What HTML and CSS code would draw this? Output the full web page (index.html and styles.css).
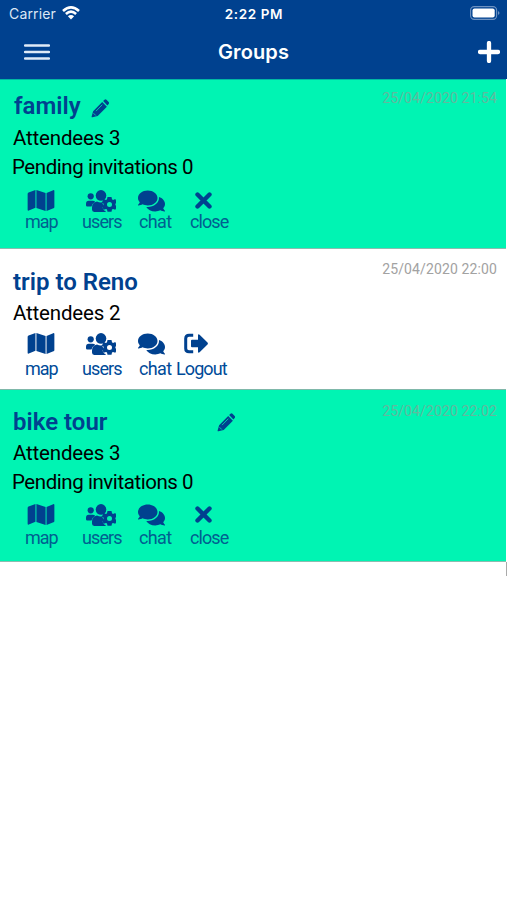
FILE: index.html
```html
<!DOCTYPE html>
<html lang="en">
<head>
<meta charset="utf-8">
<title>Groups</title>
<link rel="stylesheet" href="styles.css">
</head>
<body>
<svg class="defs" aria-hidden="true">
  <symbol id="map" viewBox="0 0 28 22"><path d="M0 4.2Q0 3 1 2.6L8.200 0v18.600L1.200 21.600Q0 22 0 20.800zM9.200 0l9.600 3.100v18.800l-9.600-3.100zM19.800 3.200l7-3Q28-.2 28 1v16.700q0 1.100-1 1.500l-7.200 2.700z"/></symbol>
  <symbol id="users" viewBox="0 0 30 22"><circle cx="4.700" cy="6.300" r="3.100"/><circle cx="15" cy="5.400" r="5.300"/><path d="M2.800 10.800h4q1.400 0 2.400.9-2.900 1.700-3.700 4.800H1.300Q0 16.500 0 15.200v-1.400Q0 10.800 2.800 10.800z"/><path d="M11 11.500q3.600 1.700 6.600.3l-1.200 2 1.500 1.500-1.500 2.300 1.700 3 1.500.4v1H8.200Q6 22 6 19.600v-2q0-5.300 5-6.100z"/><path fill-rule="evenodd" d="M21.500 7h4l.5 2.300 1 .6 2.300-.8 1.700 3.100-1.600 1.500v1.400l1.600 1.500-1.700 3.100-2.300-.8-1 .6-.5 2.300h-4l-.5-2.300-1-.6-2.300.8-1.700-3.100 1.600-1.500v-1.400L16 12.200l1.700-3.100 2.300.8 1-.6zM23.500 11.900a2.500 2.500 0 1 0 0 5a2.500 2.500 0 1 0 0-5z"/></symbol>
  <symbol id="chat" viewBox="0 0 576 512"><path d="M416 192c0-88.400-93.100-160-208-160S0 103.600 0 192c0 34.300 14.100 65.900 38 92-13.400 30.200-35.500 54.200-35.800 54.500-4.500 4.700-3 13.500 5.800 13.500 36.600 0 66.900-12.300 88.700-25 32.200 15.700 70.300 25 111.300 25 114.900 0 208-71.600 208-160z"/><path d="M538 412c23.900-26 38-57.700 38-92 0-66.900-53.500-124.200-129.300-148.100.9 6.600 1.300 13.300 1.300 20.100 0 105.900-107.700 192-240 192-10.800 0-21.300-.8-31.700-1.900C207.800 439.600 281.800 480 368 480c41 0 79.100-9.200 111.300-25 21.800 12.700 52.100 25 88.700 25 8.800 0 10.300-8.800 5.800-13.500-.3-.3-22.400-24.200-35.800-54.500z"/></symbol>
  <symbol id="close" viewBox="0 0 17 17"><path d="M2.500 2.500l12 12M14.500 2.500l-12 12" fill="none" stroke="currentColor" stroke-width="4.400" stroke-linecap="round"/></symbol>
  <symbol id="logout" viewBox="0 0 24 20"><path d="M9.200 1.700H5Q1.700 1.700 1.700 5v10q0 3.300 3.300 3.300h4.200" fill="none" stroke="currentColor" stroke-width="3"/><path d="M8 6.300h6V2q0-2 1.600-.8L23.500 9q.8 1 0 2l-7.900 7.800Q14 20 14 18v-4.300H8q-1 0-1-1V7.300q0-1 1-1z"/></symbol>
  <symbol id="pencil" viewBox="0 0 18 19"><path d="M2.100 12.300L11.200 3l4.700 4.700-9.200 9.300-5.200 1.300q-1 .2-.9-.8zM12.100 2.100l1.400-1.400q1-.9 2 0l2.200 2.200q.8 1 0 2l-1.300 1.700z"/><path class="pencil-line" d="M5 12.100l6.300-6.400M2.500 14.200l2.300 2.300"/></symbol>
</svg>

<header class="header">
  <div class="status">
    <div class="status-left"><span class="carrier">Carrier</span>
      <svg class="wifi" viewBox="0 0 18 14"><path d="M1 5Q9-2.200 17 5M3.900 8Q9 3.400 14.100 8" fill="none" stroke="currentColor" stroke-width="2.600"/><path d="M5.900 10.200Q9 7.600 12.100 10.200L9 13.500z"/></svg>
    </div>
    <span class="clock">2:22 PM</span>
    <svg class="battery" viewBox="0 0 30 14"><rect class="battery-case" x=".6" y=".6" width="26" height="12.800" rx="3.600"/><rect x="2.500" y="2.500" width="22.200" height="9" rx="2"/><path class="battery-tip" d="M28 5q3 2 0 4z"/></svg>
  </div>
  <div class="nav">
    <svg class="menu" viewBox="0 0 26 16"><path d="M1 1.500h24M1 8h24M1 14.500h24"/></svg>
    <h1 class="nav-title">Groups</h1>
    <svg class="plus" viewBox="0 0 22 22"><path d="M11 2v18M2 11h18"/></svg>
  </div>
</header>

<main>
  <section class="card owned first">
    <time class="date">25/04/2020 21:54</time>
    <h2 class="name"><span class="family">family</span><svg class="pencil"><use href="#pencil"/></svg></h2>
    <p class="line">Attendees 3</p>
    <p class="line pending">Pending invitations 0</p>
    <div class="actions">
      <a class="action a-map"><svg><use href="#map"/></svg><span>map</span></a>
      <a class="action a-users"><svg><use href="#users"/></svg><span>users</span></a>
      <a class="action a-chat"><svg><use href="#chat"/></svg><span>chat</span></a>
      <a class="action a-close"><svg><use href="#close"/></svg><span>close</span></a>
    </div>
  </section>
  <section class="card joined">
    <time class="date">25/04/2020 22:00</time>
    <h2 class="name"><span class="trip">trip to Reno</span></h2>
    <p class="line">Attendees 2</p>
    <div class="actions">
      <a class="action a-map"><svg><use href="#map"/></svg><span>map</span></a>
      <a class="action a-users"><svg><use href="#users"/></svg><span>users</span></a>
      <a class="action a-chat"><svg><use href="#chat"/></svg><span>chat</span></a>
      <a class="action a-logout"><svg><use href="#logout"/></svg><span>Logout</span></a>
    </div>
  </section>
  <section class="card owned last">
    <time class="date">25/04/2020 22:02</time>
    <h2 class="name"><span class="bike">bike tour</span><svg class="pencil"><use href="#pencil"/></svg></h2>
    <p class="line">Attendees 3</p>
    <p class="line pending">Pending invitations 0</p>
    <div class="actions">
      <a class="action a-map"><svg><use href="#map"/></svg><span>map</span></a>
      <a class="action a-users"><svg><use href="#users"/></svg><span>users</span></a>
      <a class="action a-chat"><svg><use href="#chat"/></svg><span>chat</span></a>
      <a class="action a-close"><svg><use href="#close"/></svg><span>close</span></a>
    </div>
  </section>
  <div class="scroll-end"></div>
</main>
</body>
</html>
```
FILE: styles.css
```css
* { box-sizing: border-box; }
body { margin: 0; background: #fff; font-family: Roboto, "Liberation Sans", sans-serif; color: #000; }
h1, h2, p { margin: 0; }
svg { display: block; fill: currentColor; flex: none; }
.defs { position: absolute; width: 0; height: 0; }

.header { height: 79px; background: #00418f; color: #fff; font-family: Inter, sans-serif; }
.status { height: 28px; display: grid; grid-template-columns: 1fr auto 1fr; align-items: center; padding: 0 7px 0 9px; }
.status-left { display: flex; align-items: center; }
.carrier { font-size: 14px; line-height: 16px; letter-spacing: .15px; width: 53px; color: #dce7f5; }
.wifi { width: 18px; height: 14px; margin-top: -2px; }
.clock { font-size: 13.5px; font-weight: 600; letter-spacing: .6px; margin-left: -1px; }
.battery { width: 30px; height: 14px; justify-self: end; margin-top: -2px; }
.battery-case { fill: none; stroke: #6e92c1; stroke-width: 1.1; }
.battery-tip { fill: #6e92c1; }
.nav { height: 48px; display: grid; grid-template-columns: 1fr auto 1fr; align-items: center; padding: 0 7px 0 24px; }
.menu { width: 26px; height: 16px; fill: none; stroke: #dfeaf7; stroke-width: 2.4; stroke-linecap: round; }
.nav-title { font-size: 20px; line-height: 24px; font-weight: 600; letter-spacing: .1px; margin-left: -17px; }
.plus { width: 22px; height: 22px; justify-self: end; stroke: #fff; stroke-width: 4.3; stroke-linecap: round; fill: none; }

.card { position: relative; width: 506px; border-bottom: 1px solid #8cbcb0; }
.owned { background: #00f4b3; }
.first { height: 170px; padding-top: 11px; border-top: 1px solid #00b8a5; }
.joined { height: 141px; padding-top: 17px; border-color: #7fb8aa; }
.last { height: 172px; padding-top: 16px; }
.date { position: absolute; right: 9px; top: 12px; font-size: 14px; line-height: 16px; letter-spacing: .12px; color: #a2a2a2; }
.first .date { top: 10px; }
.last .date { top: 13px; }
.owned .date { color: #61b99e; }
.name { display: flex; align-items: center; height: 30px; margin-left: 13px; color: #00418f; font-size: 24px; line-height: 30px; font-weight: 600; }
.family { width: 78px; padding-left: 1px; }
.trip, .bike { padding-top: 1px; }
.bike { width: 204px; }
.pencil { width: 18px; height: 19px; margin-top: 4px; }
.last .pencil { margin-top: 2px; }
.pencil-line { fill: none; stroke: #00d5ac; stroke-width: .9; }
.line { margin-left: 13px; height: 29px; font-size: 20.5px; line-height: 34px; letter-spacing: -.17px; }
.pending { margin-left: 12px; line-height: 35px; letter-spacing: -.44px; }
.actions { display: flex; align-items: flex-start; padding-left: 25px; margin-top: 11px; color: #00418f; }
.joined .actions { margin-top: 8px; }
.last .actions { margin-top: 10px; }
.action { display: block; font-size: 18px; line-height: 20px; letter-spacing: -.9px; white-space: nowrap; color: #00418f; }
.action span { display: block; color: #006090; }
.joined .action span { color: #004b99; padding-top: 4px; }
.last .action span { padding-top: 2px; }
.action svg { height: 21px; margin-bottom: 1px; }
.a-map { width: 57px; }
.a-map span { letter-spacing: -1px; }
.a-map svg { width: 28px; margin-left: 2px; }
.a-users { width: 57px; }
.a-users svg { width: 30px; height: 22px; margin: 0 0 0 4px; }
.a-chat { width: 51px; }
.a-chat span { letter-spacing: -.65px; }
.a-chat svg { width: 27px; height: 24px; margin: -1px 0 -1px -1px; }
.a-close svg { width: 17px; margin-left: 5px; }
.joined .a-chat { width: 37px; }
.a-logout svg { width: 24px; margin-left: 8px; }
.scroll-end { width: 1px; height: 14px; margin-left: auto; background: #aaa; }
```
